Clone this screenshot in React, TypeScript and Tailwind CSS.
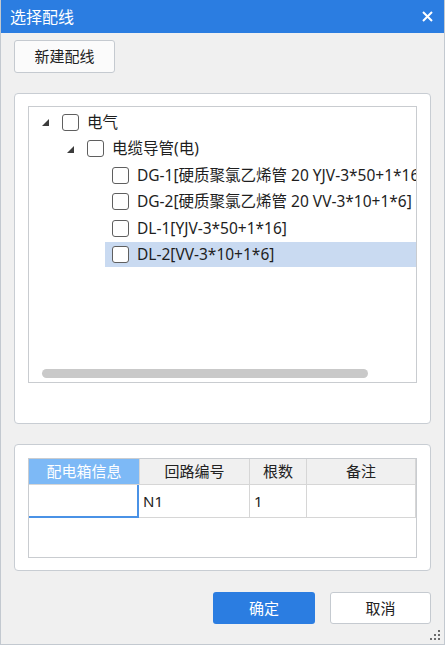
import React from 'react';

/* ------------------------------------------------------------------ */
/*  Data                                                              */
/* ------------------------------------------------------------------ */
interface TreeRow {
  level   : number;
  label   : string;
  expand? : boolean;
  selected?: boolean;
}

const rows: TreeRow[] = [
  { level: 0, label: '电气',                                   expand: true },
  { level: 1, label: '电缆导管(电)',                            expand: true },
  { level: 2, label: 'DG-1[硬质聚氯乙烯管 20 YJV-3*50+1*16]' },
  { level: 2, label: 'DG-2[硬质聚氯乙烯管 20 VV-3*10+1*6]' },
  { level: 2, label: 'DL-1[YJV-3*50+1*16]' },
  { level: 2, label: 'DL-2[VV-3*10+1*6]', selected: true },
];

const font = "font-['Noto_Sans','Noto_Sans_CJK_SC',sans-serif]";

/* ------------------------------------------------------------------ */
/*  Bits                                                              */
/* ------------------------------------------------------------------ */
const Expander = () => (
  <svg width="7" height="7" viewBox="0 0 7 7" className="shrink-0">
    <polygon points="7,0 7,7 0,7" fill="#3c3c3c" />
  </svg>
);

const Check = () => (
  <span className="w-[17px] h-[17px] shrink-0 rounded-[3px] border border-[#5f5f5f] bg-white" />
);

const Row: React.FC<{ row: TreeRow }> = ({ row }) => (
  <div className="h-[26.5px] flex items-center whitespace-nowrap" style={{ paddingLeft: 13 + row.level * 25 }}>
    <span className="w-[13px] shrink-0 flex items-center pt-[1px]">{row.expand && <Expander />}</span>
    <div className={`h-[25px] flex items-center pl-[7px] pr-[200px] ${row.selected ? 'bg-[#c9daf1]' : ''}`}>
      <Check />
      <span className="ml-[8px] text-[15.5px] leading-none text-[#1e1e1e]">{row.label}</span>
    </div>
  </div>
);

/* ------------------------------------------------------------------ */
/*  App                                                               */
/* ------------------------------------------------------------------ */
export default function App() {
  return (
    <div className={`${font} w-[445px] h-[645px] bg-[#f0f0f0] border-x border-b border-[#c3c9d0] flex flex-col overflow-hidden relative`}>

      {/* ---------------- title bar ---------------- */}
      <div className="h-[33px] shrink-0 bg-[#2b7de1] -mx-px flex items-center justify-between pl-[10px] pr-[12px]">
        <span className="text-[16px] leading-none text-white">选择配线</span>
        <svg width="11" height="11" viewBox="0 0 11 11">
          <path d="M1 1L10 10M10 1L1 10" stroke="#fff" strokeWidth="2" />
        </svg>
      </div>

      <div className="px-[13px] flex flex-col">
        {/* new button */}
        <button className="mt-[7px] w-[101px] h-[33px] rounded-[3px] border border-[#c5cad0] bg-[#fbfbfb] text-[15px] leading-none text-[#222]">
          新建配线
        </button>

        {/* ---------------- tree panel ---------------- */}
        <div className="mt-[20px] h-[331px] rounded-[4px] border border-[#c8cdd3] bg-white pt-[12px] px-[13px]">
          <div className="h-[277px] border border-[#c9ccd0] overflow-hidden flex flex-col pt-[2px]">
            {rows.map((r, i) => <Row key={i} row={r} />)}
            <div className="mt-auto mb-[4px] ml-[13px] w-[326px] h-[9px] rounded-full bg-[#c9c9c9]" />
          </div>
        </div>

        {/* ---------------- table panel ---------------- */}
        <div className="mt-[20px] h-[127px] rounded-[4px] border border-[#c8cdd3] bg-white pt-[13px] px-[13px]">
          <div className="h-[100px] border border-[#c9ccd0] flex flex-col text-[15px] leading-none text-[#222]">
            <div className="h-[26px] flex bg-[#f0f0f0] border-b border-[#d6d6d6]">
              <div className="w-[110px] bg-[#7db9f6] text-white flex items-center justify-center">配电箱信息</div>
              <div className="w-[110px] border-l border-[#d6d6d6] flex items-center justify-center">回路编号</div>
              <div className="w-[57px] border-l border-[#d6d6d6] flex items-center justify-center">根数</div>
              <div className="flex-1 border-l border-[#d6d6d6] border-r flex items-center justify-center">备注</div>
            </div>
            <div className="h-[33px] flex border-b border-[#d6d6d6]">
              <div className="w-[110px] border-r-2 border-b-2 border-[#4a92e6] -mb-px" />
              <div className="w-[110px] flex items-center pl-[4px]">N1</div>
              <div className="w-[57px] border-l border-[#d6d6d6] flex items-center pl-[4px]">1</div>
              <div className="flex-1 border-l border-r border-[#d6d6d6]" />
            </div>
          </div>
        </div>

        {/* ---------------- footer buttons ---------------- */}
        <div className="mt-[21px] flex justify-end gap-[15px]">
          <button className="w-[102px] h-[32px] rounded-[3px] bg-[#2b7de1] text-white text-[15px] leading-none">确定</button>
          <button className="w-[101px] h-[32px] rounded-[3px] border border-[#c5cad0] bg-white text-[15px] leading-none text-[#222]">取消</button>
        </div>
      </div>

      {/* resize grip */}
      <svg width="10" height="10" viewBox="0 0 10 10" className="absolute right-[4px] bottom-[4px]">
        {[[8, 0], [8, 4], [4, 4], [8, 8], [4, 8], [0, 8]].map(([x, y], i) => (
          <rect key={i} x={x} y={y} width="2" height="2" fill="#6b6b6b" />
        ))}
      </svg>
    </div>
  );
}
